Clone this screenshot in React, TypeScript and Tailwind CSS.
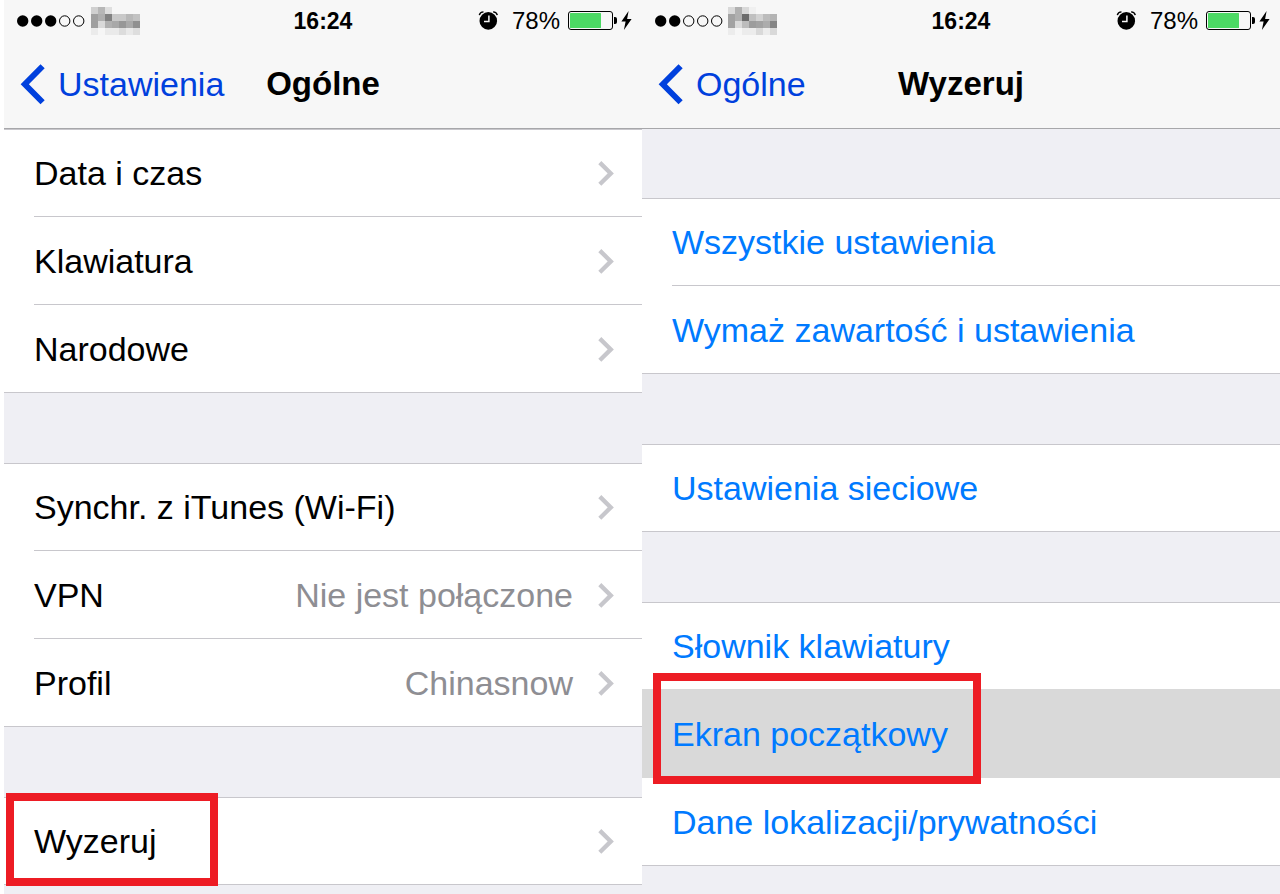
import { clsx } from "clsx";

interface RowType {
  label: string;
  value?: string;
  arrow?: boolean;
  selected?: boolean;
  mark?: string;
}

interface ScreenProps {
  title: string;
  back: string;
  signal: number;
  carrier: string[][];
  carrierClass: string;
  topGap?: boolean;
  link?: boolean;
  groups: RowType[][];
}

const generalGroups: RowType[][] = [
  [
    { label: "Data i czas", arrow: true },
    { label: "Klawiatura", arrow: true },
    { label: "Narodowe", arrow: true },
  ],
  [
    { label: "Synchr. z iTunes (Wi-Fi)", arrow: true },
    { label: "VPN", value: "Nie jest połączone", arrow: true },
    { label: "Profil", value: "Chinasnow", arrow: true },
  ],
  [
    {
      label: "Wyzeruj",
      arrow: true,
      mark: "left-[2px] -top-[5px] w-[212px] h-[93px]",
    },
  ],
];

const resetGroups: RowType[][] = [
  [{ label: "Wszystkie ustawienia" }, { label: "Wymaż zawartość i ustawienia" }],
  [{ label: "Ustawienia sieciowe" }],
  [
    { label: "Słownik klawiatury" },
    {
      label: "Ekran początkowy",
      selected: true,
      mark: "left-[11px] -top-[17px] w-[328px] h-[111px]",
    },
    { label: "Dane lokalizacji/prywatności" },
  ],
];

const leftCarrier = [
  ["#d0d0d0", "#b7b7b7", "#dfdfdf", "", "", "", ""],
  ["#a0a0a0", "#afafaf", "#828282", "#c9c9c9", "#c9c9c9", "#b8b8b8", "#c2c2c2"],
  ["#9f9f9f", "#d9d9d9", "#b0b0b0", "#a8a8a8", "#979797", "#a9a9a9", "#909090"],
  ["#ebebeb", "#f6f6f6", "#eaeaea", "#eaeaea", "#dcdcdc", "#e9e9e9", "#dedede"],
];

const rightCarrier = [
  ["#d9d9d9", "#b0b0b0", "#d9d9d9", "#f0f0f0", "", "", ""],
  ["#a2a2a2", "#b0b0b0", "#6c6c6c", "#c0c0c0", "#d2d2d2", "#bcbcbc", "#b4b4b4"],
  ["#a2a2a2", "#dadada", "#bcbcbc", "#9c9c9c", "#a2a2a2", "#acacac", "#858585"],
  ["#ececec", "#f6f6f6", "#ececec", "#ececec", "#d9d9d9", "#ececec", "#d9d9d9"],
];

function Signal({ level }: { level: number }) {
  return (
    <svg width="68" height="12" viewBox="0 0 68 12" aria-hidden="true">
      {[0, 1, 2, 3, 4].map((i) => (
        <circle
          key={i}
          cx={5.7 + i * 14}
          cy="6"
          r={i < level ? 5.7 : 5.2}
          fill={i < level ? "#000" : "none"}
          stroke={i < level ? "none" : "#000"}
        />
      ))}
    </svg>
  );
}

function Carrier({ cells }: { cells: string[][] }) {
  return (
    <svg
      width="49"
      height="28"
      viewBox="0 0 49 28"
      shapeRendering="crispEdges"
      aria-hidden="true"
    >
      {cells.map((row, y) =>
        row.map((color, x) => (
          <rect
            key={`${x}-${y}`}
            x={x * 7}
            y={y * 7}
            width="7"
            height="7"
            fill={color || "none"}
          />
        )),
      )}
    </svg>
  );
}

function AlarmIcon() {
  return (
    <svg width="20" height="19" viewBox="0 0 20 19" aria-hidden="true">
      <circle cx="10.3" cy="9.9" r="8.8" fill="#000" />
      <path d="M10.9 4.6v6H6" fill="none" stroke="#f7f7f7" strokeWidth="1.5" />
      <path
        d="M1.3 4.2C1.7 2.4 3.3 1 5.5 0.9M15.1 0.9C17.3 1 18.9 2.4 19.3 4.2"
        fill="none"
        stroke="#000"
        strokeWidth="1.4"
      />
    </svg>
  );
}

function Battery() {
  return (
    <svg width="50" height="19" viewBox="0 0 50 19" aria-hidden="true">
      <rect
        x="0.5"
        y="0.5"
        width="44"
        height="18"
        rx="2.5"
        fill="none"
        stroke="#000"
      />
      <rect x="2" y="2" width="31" height="15" rx="0.5" fill="#4cd964" />
      <path d="M46 6h1a2 2 0 0 1 2 2v3a2 2 0 0 1-2 2h-1z" fill="#000" />
    </svg>
  );
}

function Bolt() {
  return (
    <svg width="11" height="19" viewBox="0 0 11 19" aria-hidden="true">
      <path d="M7.6 0L0.4 10.4h4.2L2.9 19 10.6 8H6.1z" fill="#000" />
    </svg>
  );
}

function StatusBar({
  signal,
  carrier,
  carrierClass,
}: Pick<ScreenProps, "signal" | "carrier" | "carrierClass">) {
  return (
    <div className="grid h-[41px] grid-cols-[1fr_auto_1fr] items-center">
      <div className={clsx("flex items-center pl-[13px]", carrierClass)}>
        <Signal level={signal} />
        <Carrier cells={carrier} />
      </div>
      <span className="text-[23px] leading-7 font-bold">16:24</span>
      <div className="flex items-center justify-end pr-[10px]">
        <AlarmIcon />
        <span className="mr-2 ml-[14px] text-[24px] leading-7">78%</span>
        <Battery />
        <span className="ml-[3px]">
          <Bolt />
        </span>
      </div>
    </div>
  );
}

interface RowProps {
  row: RowType;
  first: boolean;
  last: boolean;
  beforeSelected: boolean;
  link?: boolean;
}

function Row({ row, first, last, beforeSelected, link }: RowProps) {
  return (
    <li
      className={clsx(
        "relative h-[88px]",
        row.selected ? "bg-[#d9d9d9]" : "bg-white",
        beforeSelected ? "border-b-[#d9d9d9]" : "border-b-[#c8c7cc]",
        first && "border-t border-t-[#c8c7cc]",
        (last || beforeSelected) && "border-b",
      )}
    >
      <button
        type="button"
        className={clsx("flex h-full w-full pl-[30px] text-left", link ? "text-[#007aff]" : "text-black")}
      >
        <span
          className={clsx(
            "flex h-full min-w-0 flex-1 items-center border-[#c8c7cc] pr-7",
            !last && !row.selected && !beforeSelected && "border-b",
          )}
        >
          <span className="flex-1 whitespace-nowrap">{row.label}</span>
          {row.value && (
            <span className="whitespace-nowrap text-[#8e8e93]">{row.value}</span>
          )}
          {row.arrow && (
            <svg className="ml-6" width="17" height="26" viewBox="0 0 17 26" aria-hidden="true">
              <path d="M2.8 2.6L13.8 13.4 2.8 24.2" fill="none" stroke="#c7c7cc" strokeWidth="4.3" />
            </svg>
          )}
        </span>
      </button>
      {row.mark && (
        <div
          className={clsx(
            "pointer-events-none absolute z-10 border-8 border-[#ed1c24]",
            row.mark,
          )}
        />
      )}
    </li>
  );
}

function Screen({ title, back, signal, carrier, carrierClass, topGap, link, groups }: ScreenProps) {
  return (
    <section className="flex min-w-0 flex-1 flex-col bg-[#efeff4] text-[34px] leading-10">
      <header className="h-[129px] border-b border-[#a7a7aa] bg-[#f7f7f7]">
        <StatusBar signal={signal} carrier={carrier} carrierClass={carrierClass} />
        <nav className="grid h-[86px] grid-cols-[1fr_auto_1fr] items-center">
          <a href="#" className="flex items-center gap-3 pl-4 text-[#0040dd]">
            <svg width="26" height="42" viewBox="0 0 26 42" aria-hidden="true">
              <path d="M22.6 3.3L4.8 21.3l17.8 18" fill="none" stroke="#0040dd" strokeWidth="5.9" />
            </svg>
            {back}
          </a>
          <h1 className="text-[33px] font-bold">{title}</h1>
        </nav>
      </header>
      <div className={clsx("flex flex-col gap-[70px]", topGap && "pt-[69px]")}>
        {groups.map((rows, i) => (
          <ul key={i}>
            {rows.map((row, j) => (
              <Row
                key={row.label}
                row={row}
                first={j === 0}
                last={j === rows.length - 1}
                beforeSelected={!!rows[j + 1]?.selected}
                link={link}
              />
            ))}
          </ul>
        ))}
      </div>
    </section>
  );
}

export default function App() {
  return (
    <main className="flex min-h-screen bg-white pl-1 font-['Liberation_Sans',Arial,sans-serif] text-black">
      <Screen
        title="Ogólne"
        back="Ustawienia"
        signal={3}
        carrier={leftCarrier}
        carrierClass="gap-[6px]"
        groups={generalGroups}
      />
      <Screen
        title="Wyzeruj"
        back="Ogólne"
        signal={2}
        carrier={rightCarrier}
        carrierClass="gap-[5px]"
        topGap
        link
        groups={resetGroups}
      />
    </main>
  );
}
